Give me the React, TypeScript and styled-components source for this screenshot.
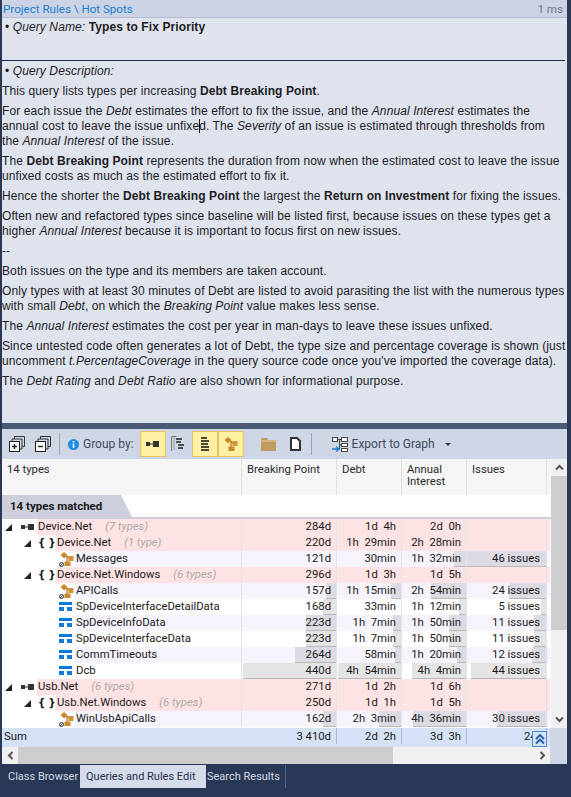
import React from 'react';
import styled, { createGlobalStyle } from 'styled-components';

const GlobalStyle = createGlobalStyle`
  html, body {
    margin: 0;
    padding: 0;
    background: #293955;
  }
`;

const Page = styled.div`
  width: 571px;
  height: 797px;
  box-sizing: border-box;
  padding: 0 4px 0 2px;
  background: #293955;
  overflow: hidden;
  display: flex;
  flex-direction: column;
  font-family: Roboto, 'Liberation Sans', sans-serif;
  color: #1a1a1a;
`;

const PathBar = styled.div`
  height: 18px;
  flex: none;
  display: flex;
  justify-content: space-between;
  align-items: center;
  padding: 0 4px 0 1px;
  background: #ccd3e4;
  border-bottom: 1px solid #b4bccd;
  box-sizing: border-box;
  font-size: 11.6px;
`;

const PathLink = styled.span`
  color: #1a7fd0;
`;

const Timing = styled.span`
  color: #6d7686;
`;

const QueryPanel = styled.div`
  height: 405px;
  flex: none;
  background: #dfe3ee;
  box-sizing: border-box;
  font-family: 'Liberation Sans', sans-serif;
  font-size: 12px;
  letter-spacing: 0.1px;
  line-height: 15px;
  color: #1c1c24;
  white-space: nowrap;
  overflow: hidden;
`;

const NameBlock = styled.div`
  height: 43px;
  padding: 2px 0 0 3px;
  box-sizing: border-box;
  border-bottom: 1px solid #1f2b45;
  margin-right: 2px;
`;

const DescHead = styled.div`
  padding: 3px 0 0 3px;
  margin-bottom: 5px;
`;

const Para = styled.p`
  margin: 0 0 5px;
`;

const Caret = styled.span`
  display: inline-block;
  width: 1px;
  height: 14px;
  margin-right: -1px;
  background: #111;
  vertical-align: -3px;
`;

const Splitter = styled.div`
  height: 6px;
  flex: none;
  background: #4b5a75;
`;

const Toolbar = styled.div`
  height: 30px;
  flex: none;
  display: flex;
  align-items: center;
  background: #cfd6e5;
  font-size: 12px;
  color: #3f4a60;
  padding-left: 7px;
`;

const ToolIcon = styled.span<{ $gap?: number }>`
  display: flex;
  align-items: center;
  justify-content: center;
  margin-left: ${(p) => p.$gap ?? 0}px;
`;

const ToolSep = styled.span<{ $gap: number; $after: number }>`
  width: 1px;
  height: 22px;
  background: #99a2b5;
  margin: 0 ${(p) => p.$after}px 0 ${(p) => p.$gap}px;
`;

const Toggle = styled.span<{ $gap?: number }>`
  width: 26px;
  height: 26px;
  box-sizing: border-box;
  display: flex;
  align-items: center;
  justify-content: center;
  background: #fff0a3;
  border: 1px solid #e5c365;
  margin-left: ${(p) => p.$gap ?? 0}px;
`;

const ToolLabel = styled.span<{ $gap: number }>`
  margin-left: ${(p) => p.$gap}px;
`;

const DropCaret = styled.span`
  margin-left: 10px;
  width: 0;
  height: 0;
  border-left: 3px solid transparent;
  border-right: 3px solid transparent;
  border-top: 3px solid #333;
`;

const GridArea = styled.div`
  height: 269px;
  flex: none;
  display: flex;
  background: #fff;
`;

const GridMain = styled.div`
  width: 549px;
  flex: none;
  display: flex;
  flex-direction: column;
`;

const HeadRow = styled.div`
  height: 36px;
  flex: none;
  display: grid;
  grid-template-columns: 240px 95px 65px 65px 80px 4px;
  background: #f5f5f5;
  font-size: 11.3px;
  line-height: 12px;
  color: #2a2a30;
`;

const HeadCell = styled.div`
  border-right: 1px solid #e0e0e0;
  padding: 5px 0 0 5px;
  box-sizing: border-box;
`;

const GroupBar = styled.div`
  height: 24px;
  flex: none;
  box-sizing: border-box;
  border-bottom: 2px solid #cdd0dc;
`;

const GroupTab = styled.div`
  width: 130px;
  height: 22px;
  box-sizing: border-box;
  padding: 4px 0 0 8px;
  background: #cdd0dc;
  clip-path: polygon(0 0, 119px 0, 130px 100%, 0 100%);
  font-size: 11.5px;
  font-weight: 700;
  line-height: 14px;
`;

const Row = styled.div`
  height: 16px;
  flex: none;
  display: grid;
  grid-template-columns: 240px 95px 65px 65px 80px 3px;
  font-size: 11.3px;
  line-height: 16px;
`;

const tones = { pink: '#fde3e3', lav: '#f6f3fd', white: '#ffffff' };
type Tone = keyof typeof tones;

const NameCell = styled.div<{ $indent: number }>`
  display: flex;
  align-items: center;
  padding-left: ${(p) => p.$indent}px;
  min-width: 0;
`;

const Expander = styled.svg`
  width: 7px;
  height: 7px;
  margin-right: 9px;
  flex: none;
`;

const NodeIcon = styled.span`
  width: 16px;
  flex: none;
  display: flex;
  align-items: center;
  white-space: nowrap;
`;

const Braces = styled.span`
  font-family: 'DejaVu Sans', sans-serif;
  font-weight: 700;
  font-size: 10px;
  margin-left: -2px;
  color: #111;
`;

const NameLabel = styled.div<{ $tone: Tone }>`
  flex: 1;
  height: 16px;
  background: ${(p) => tones[p.$tone]};
  padding-left: 1px;
  white-space: nowrap;
  overflow: hidden;
  border-right: 1px solid #e4e4e4;
`;

const Count = styled.i`
  color: #aaaaaa;
  margin-left: 13px;
`;

const ValueCell = styled.div<{ $tone: Tone; $pad: number }>`
  position: relative;
  background: ${(p) => tones[p.$tone]};
  border-right: 1px solid #e4e4e4;
  text-align: right;
  padding-right: ${(p) => p.$pad}px;
  white-space: pre;
`;

const Bar = styled.span`
  position: absolute;
  right: 0;
  top: 0;
  bottom: 0;
  box-sizing: border-box;
  background: rgba(120, 120, 120, 0.2);
  border-bottom: 1px solid #b8b8b8;
`;

const ValueText = styled.span`
  position: relative;
`;

const Filler = styled.div<{ $tone: Tone }>`
  background: ${(p) => tones[p.$tone]};
`;

const VScroll = styled.div`
  width: 16px;
  flex: none;
  display: flex;
  flex-direction: column;
  background: #f0f0f0;
`;

const ScrollEnd = styled.div`
  height: 17px;
  flex: none;
  display: flex;
  align-items: center;
  justify-content: center;
`;

const VThumb = styled.div`
  height: 154px;
  flex: none;
  background: #cdcdcd;
`;

const VTrack = styled.div`
  flex: 1;
`;

const SumRow = styled.div`
  height: 19px;
  flex: none;
  display: grid;
  grid-template-columns: 240px 95px 65px 65px 80px 3px 1fr;
  position: relative;
  font-size: 11.3px;
  line-height: 18px;
  background: #d5e2f5;
`;

const SumName = styled.div`
  padding-left: 2px;
`;

const SumCell = styled.div`
  height: 16px;
  border-right: 1px solid #a8b8e0;
  text-align: right;
  padding-right: 5px;
  white-space: pre;
  overflow: hidden;
`;

const SumClipped = styled(SumCell)`
  text-align: left;
  padding: 0 0 0 57px;
`;

const SumCorner = styled.div`
  background: #cfd6e5;
`;

const CollapseButton = styled.span`
  position: absolute;
  left: 530px;
  top: 3px;
  width: 15px;
  height: 16px;
  box-sizing: border-box;
  display: flex;
  align-items: center;
  justify-content: center;
  background: #d5e2f5;
  border: 1px solid #4a90d9;
`;

const HScroll = styled.div`
  height: 17px;
  flex: none;
  display: flex;
  background: #f0f0f0;
`;

const HEnd = styled.div`
  width: 16px;
  flex: none;
  display: flex;
  align-items: center;
  justify-content: center;
`;

const HThumb = styled.div`
  width: 375px;
  flex: none;
  background: #cdcdcd;
`;

const HTrack = styled.div`
  flex: 1;
`;

const HCorner = styled.div`
  width: 17px;
  flex: none;
  background: #cfd6e5;
`;

const TabStrip = styled.div`
  margin: 1px 0 0 -2px;
  height: 23px;
  flex: none;
  display: flex;
  font-size: 11px;
  line-height: 23px;
`;

const Tab = styled.div<{ $w: number; $pad: number; $active?: boolean; $divider?: boolean }>`
  width: ${(p) => p.$w}px;
  box-sizing: border-box;
  padding-left: ${(p) => p.$pad}px;
  white-space: nowrap;
  background: ${(p) => (p.$active ? '#d5dbe8' : 'transparent')};
  color: ${(p) => (p.$active ? '#26324a' : '#d3d9e6')};
  border-right: ${(p) => (p.$divider ? '1px solid #56657f' : 'none')};
`;

const AssemblyIcon = () => (
  <svg width="14" height="8" viewBox="0 0 14 8">
    <rect x="0" y="2" width="4" height="4" fill="#333" />
    <rect x="4" y="3.5" width="3" height="1" fill="#333" />
    <rect x="7" y="1" width="6" height="6" fill="#333" />
  </svg>
);

const TypeIcon = () => (
  <svg width="13" height="10" viewBox="0 0 13 10">
    <rect x="0" y="0" width="13" height="3" fill="#0e7ad6" />
    <rect x="0" y="5" width="5" height="4" fill="#0e7ad6" />
    <rect x="8" y="5" width="5" height="4" fill="#0e7ad6" />
  </svg>
);

const ClassIcon = ({ size = 15, mark = true }: { size?: number; mark?: boolean }) => (
  <svg width={size} height={size} viewBox="0 0 15 15">
    <path d="M5 3l7 4M8 5l0 6" stroke="#a8701c" strokeWidth="1.200" fill="none" />
    <path d="M5 0l3.500 3L5 6.500 1.500 3z" fill="#c98a2e" />
    <rect x="9.500" y="4" width="5" height="5" fill="#d49436" />
    <rect x="5.500" y="9.500" width="6" height="4.500" fill="#c98a2e" />
    {mark && (
      <g fill="#fff" stroke="#222" strokeWidth="0.9">
        <circle cx="2.500" cy="12.500" r="2" />
        <path d="M1 14l3-3" />
      </g>
    )}
  </svg>
);

const ExpandAllIcon = ({ minus }: { minus?: boolean }) => (
  <svg width="16" height="16" viewBox="0 0 16 16">
    <path d="M5.500 3V.5h10v10H13M3 5.500V3h10v10h-2.500" fill="none" stroke="#333" />
    <rect x="0.500" y="5.500" width="10" height="10" fill="#fff" stroke="#222" />
    <path d="M3 10.500h5" stroke="#222" strokeWidth="1.400" />
    {!minus && <path d="M5.500 8v5" stroke="#222" strokeWidth="1.400" />}
  </svg>
);

const InfoIcon = () => (
  <svg width="11" height="11" viewBox="0 0 11 11">
    <circle cx="5.500" cy="5.500" r="5.500" fill="#1c8fe0" />
    <rect x="4.700" y="2" width="1.600" height="1.500" fill="#fff" />
    <rect x="4.700" y="4.500" width="1.600" height="4.500" fill="#fff" />
  </svg>
);

const TreeIcon = () => (
  <svg width="13" height="16" viewBox="0 0 13 16">
    <path d="M.5 15V.5h5" fill="none" stroke="#777" />
    <path d="M3 1v13" stroke="#999" />
    <path d="M5 3h6M5 6h5M7 9h6M7 12h5" stroke="#222" strokeWidth="1.300" />
  </svg>
);

const MetricIcon = () => (
  <svg width="8" height="15" viewBox="0 0 8 15">
    <path d="M0 1h6M0 4h8M0 7h7M0 10h8M0 13h8" stroke="#111" strokeWidth="1.300" />
  </svg>
);

const FolderIcon = () => (
  <svg width="15" height="13" viewBox="0 0 15 13">
    <path d="M0 2l1-2h5l1 2h8v11H0z" fill="#c09a60" />
    <path d="M0 3h15" stroke="#e4cfa8" />
  </svg>
);

const DocIcon = () => (
  <svg width="11" height="14" viewBox="0 0 11 14">
    <path d="M1 1h6l3 3v9H1z" fill="#fff" stroke="#333" strokeWidth="2" />
  </svg>
);

const GraphIcon = () => (
  <svg width="17" height="15" viewBox="0 0 17 15">
    <g fill="#fff" stroke="#444">
      <rect x="0.500" y="0.500" width="5" height="4" />
      <rect x="9.500" y="0.500" width="6" height="4" />
      <rect x="9.500" y="6.500" width="6" height="3" />
      <rect x="9.500" y="11.500" width="6" height="3" />
    </g>
    <path d="M7.500 2.500v10M5.500 2.500h4M7.500 8h2" stroke="#444" fill="none" />
    <path d="M0 12h7M4 9.500L7 12l-3 2.500" stroke="#1c7fd0" strokeWidth="1.300" fill="none" />
  </svg>
);

const Chevron = ({ d }: { d: string }) => (
  <svg width="9" height="9" viewBox="0 0 9 9">
    <path d={d} fill="none" stroke="#555" strokeWidth="2" />
  </svg>
);

const DoubleUpIcon = () => (
  <svg width="12" height="12" viewBox="0 0 12 12">
    <path d="M2 6l4-4 4 4M2 10.500l4-4 4 4" fill="none" stroke="#1d5fa8" strokeWidth="1.800" />
  </svg>
);

type Val = { t: string; b?: number };
type RowData = {
  name: string;
  count?: string;
  level: 0 | 1 | 2;
  icon?: 'class' | 'type';
  tone: Tone;
  vals: [Val, Val, Val, Val];
};

const rows: RowData[] = [
  { name: 'Device.Net', count: '(7 types)', level: 0, tone: 'pink', vals: [{ t: '284d' }, { t: '1d  4h' }, { t: '2d  0h' }, { t: '' }] },
  { name: 'Device.Net', count: '(1 type)', level: 1, tone: 'pink', vals: [{ t: '220d' }, { t: '1h  29min' }, { t: '2h  28min' }, { t: '' }] },
  { name: 'Messages', level: 2, icon: 'class', tone: 'lav', vals: [{ t: '121d' }, { t: '30min' }, { t: '1h  32min', b: 12 }, { t: '46 issues', b: 79 }] },
  { name: 'Device.Net.Windows', count: '(6 types)', level: 1, tone: 'pink', vals: [{ t: '296d' }, { t: '1d  3h' }, { t: '1d  5h' }, { t: '' }] },
  { name: 'APICalls', level: 2, icon: 'class', tone: 'lav', vals: [{ t: '157d', b: 10 }, { t: '1h  15min', b: 10 }, { t: '2h  54min', b: 35 }, { t: '24 issues', b: 37 }] },
  { name: 'SpDeviceInterfaceDetailData', level: 2, icon: 'type', tone: 'white', vals: [{ t: '168d', b: 13 }, { t: '33min' }, { t: '1h  12min', b: 7 }, { t: '5 issues', b: 5 }] },
  { name: 'SpDeviceInfoData', level: 2, icon: 'type', tone: 'lav', vals: [{ t: '223d', b: 30 }, { t: '1h  7min', b: 8 }, { t: '1h  50min', b: 17 }, { t: '11 issues', b: 12 }] },
  { name: 'SpDeviceInterfaceData', level: 2, icon: 'type', tone: 'white', vals: [{ t: '223d', b: 30 }, { t: '1h  7min', b: 8 }, { t: '1h  50min', b: 17 }, { t: '11 issues', b: 12 }] },
  { name: 'CommTimeouts', level: 2, icon: 'type', tone: 'lav', vals: [{ t: '264d', b: 41 }, { t: '58min', b: 6 }, { t: '1h  20min', b: 9 }, { t: '12 issues', b: 14 }] },
  { name: 'Dcb', level: 2, icon: 'type', tone: 'white', vals: [{ t: '440d', b: 93 }, { t: '4h  54min', b: 63 }, { t: '4h  4min', b: 54 }, { t: '44 issues', b: 75 }] },
  { name: 'Usb.Net', count: '(6 types)', level: 0, tone: 'pink', vals: [{ t: '271d' }, { t: '1d  2h' }, { t: '1d  6h' }, { t: '' }] },
  { name: 'Usb.Net.Windows', count: '(6 types)', level: 1, tone: 'pink', vals: [{ t: '250d' }, { t: '1d  1h' }, { t: '1d  5h' }, { t: '' }] },
  { name: 'WinUsbApiCalls', level: 2, icon: 'class', tone: 'lav', vals: [{ t: '162d', b: 13 }, { t: '2h  3min', b: 22 }, { t: '4h  36min', b: 53 }, { t: '30 issues', b: 49 }] },
];

const indents = [3, 22, 57];

const TreeRow = ({ row }: { row: RowData }) => (
  <Row>
    <NameCell $indent={indents[row.level]}>
      {row.level < 2 && (
        <Expander viewBox="0 0 7 7">
          <polygon points="7,0 7,7 0,7" fill="#222" />
        </Expander>
      )}
      <NodeIcon>
        {row.level === 0 && <AssemblyIcon />}
        {row.level === 1 && <Braces>{'{ }'}</Braces>}
        {row.level === 2 && (row.icon === 'class' ? <ClassIcon /> : <TypeIcon />)}
      </NodeIcon>
      <NameLabel $tone={row.tone}>
        {row.name}
        {row.count && <Count>{row.count}</Count>}
      </NameLabel>
    </NameCell>
    {row.vals.map((v, i) => (
      <ValueCell key={i} $tone={row.tone} $pad={i === 3 ? 6 : 5}>
        {v.b && <Bar style={{ width: v.b }} />}
        <ValueText>{v.t}</ValueText>
      </ValueCell>
    ))}
    <Filler $tone={row.tone} />
  </Row>
);

export default function App() {
  return (
    <Page>
      <GlobalStyle />
      <PathBar>
        <PathLink>Project Rules \ Hot Spots</PathLink>
        <Timing>1 ms</Timing>
      </PathBar>
      <QueryPanel>
        <NameBlock>
          • <i>Query Name:</i> <b>Types to Fix Priority</b>
        </NameBlock>
        <DescHead>
          • <i>Query Description:</i>
        </DescHead>
        <Para>
          This query lists types per increasing <b>Debt Breaking Point</b>.
        </Para>
        <Para>
          For each issue the <i>Debt</i> estimates the effort to fix the issue, and the <i>Annual Interest</i> estimates the
          <br />
          annual cost to leave the issue unfixe
          <Caret />d. The <i>Severity</i> of an issue is estimated through thresholds from
          <br />
          the <i>Annual Interest</i> of the issue.
        </Para>
        <Para>
          The <b>Debt Breaking Point</b> represents the duration from now when the estimated cost to leave the issue
          <br />
          unfixed costs as much as the estimated effort to fix it.
        </Para>
        <Para>
          Hence the shorter the <b>Debt Breaking Point</b> the largest the <b>Return on Investment</b> for fixing the issues.
        </Para>
        <Para>
          Often new and refactored types since baseline will be listed first, because issues on these types get a
          <br />
          higher <i>Annual Interest</i> because it is important to focus first on new issues.
        </Para>
        <Para>--</Para>
        <Para>Both issues on the type and its members are taken account.</Para>
        <Para>
          Only types with at least 30 minutes of Debt are listed to avoid parasiting the list with the numerous types
          <br />
          with small <i>Debt</i>, on which the <i>Breaking Point</i> value makes less sense.
        </Para>
        <Para>
          The <i>Annual Interest</i> estimates the cost per year in man-days to leave these issues unfixed.
        </Para>
        <Para>
          Since untested code often generates a lot of Debt, the type size and percentage coverage is shown (just
          <br />
          uncomment <i>t.PercentageCoverage</i> in the query source code once you've imported the coverage data).
        </Para>
        <Para>
          The <i>Debt Rating</i> and <i>Debt Ratio</i> are also shown for informational purpose.
        </Para>
      </QueryPanel>
      <Splitter />
      <Toolbar>
        <ToolIcon>
          <ExpandAllIcon />
        </ToolIcon>
        <ToolIcon $gap={10}>
          <ExpandAllIcon minus />
        </ToolIcon>
        <ToolSep $gap={8} $after={8} />
        <InfoIcon />
        <ToolLabel $gap={4}>Group by:</ToolLabel>
        <Toggle $gap={6}>
          <AssemblyIcon />
        </Toggle>
        <ToolIcon $gap={5}>
          <TreeIcon />
        </ToolIcon>
        <Toggle $gap={8}>
          <MetricIcon />
        </Toggle>
        <Toggle>
          <ClassIcon size={15} mark={false} />
        </Toggle>
        <ToolIcon $gap={17}>
          <FolderIcon />
        </ToolIcon>
        <ToolIcon $gap={14}>
          <DocIcon />
        </ToolIcon>
        <ToolSep $gap={10} $after={20} />
        <GraphIcon />
        <ToolLabel $gap={3}>Export to Graph</ToolLabel>
        <DropCaret />
      </Toolbar>
      <GridArea>
        <GridMain>
          <HeadRow>
            <HeadCell>14 types</HeadCell>
            <HeadCell>Breaking Point</HeadCell>
            <HeadCell>Debt</HeadCell>
            <HeadCell>
              Annual
              <br />
              Interest
            </HeadCell>
            <HeadCell>Issues</HeadCell>
            <div />
          </HeadRow>
          <GroupBar>
            <GroupTab>14 types matched</GroupTab>
          </GroupBar>
          {rows.map((row, i) => (
            <TreeRow key={i} row={row} />
          ))}
        </GridMain>
        <VScroll>
          <ScrollEnd>
            <Chevron d="M1 6.500l3.500-3.500 3.500 3.500" />
          </ScrollEnd>
          <VThumb />
          <VTrack />
          <ScrollEnd>
            <Chevron d="M1 2.500l3.500 3.500 3.500-3.500" />
          </ScrollEnd>
        </VScroll>
      </GridArea>
      <SumRow>
        <SumName>Sum</SumName>
        <SumCell>3 410d</SumCell>
        <SumCell>2d  2h</SumCell>
        <SumCell>3d  3h</SumCell>
        <SumClipped>249 issues</SumClipped>
        <div />
        <SumCorner />
        <CollapseButton>
          <DoubleUpIcon />
        </CollapseButton>
      </SumRow>
      <HScroll>
        <HEnd>
          <Chevron d="M6.500 1L3 4.500 6.500 8" />
        </HEnd>
        <HThumb />
        <HTrack />
        <HEnd>
          <Chevron d="M2.500 1L6 4.500 2.500 8" />
        </HEnd>
        <HCorner />
      </HScroll>
      <TabStrip>
        <Tab $w={80} $pad={8}>Class Browser</Tab>
        <Tab $w={126} $pad={6} $active>Queries and Rules Edit</Tab>
        <Tab $w={80} $pad={1} $divider>Search Results</Tab>
      </TabStrip>
    </Page>
  );
}
